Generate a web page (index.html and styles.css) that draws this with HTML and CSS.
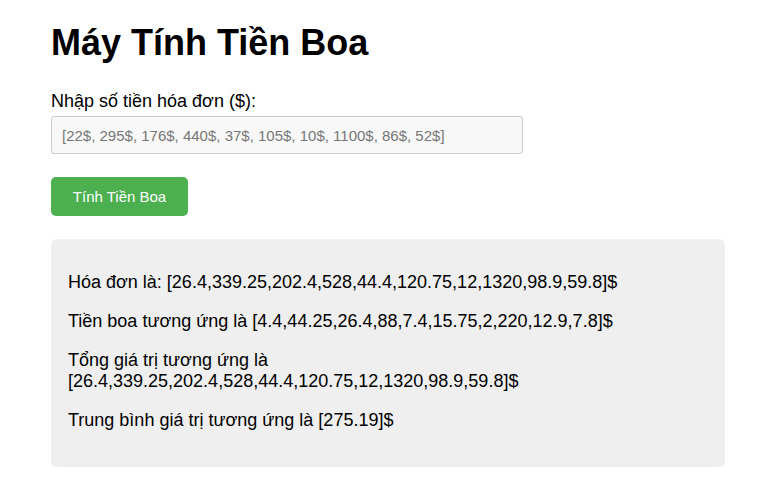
FILE: index.html
```html
<!DOCTYPE html>
<html lang="vi">
<head>
<meta charset="utf-8">
<title>Máy Tính Tiền Boa</title>
<link rel="stylesheet" href="styles.css">
</head>
<body>
<div class="container">
  <h1 class="title">Máy Tính Tiền Boa</h1>
  <label class="label" for="bills">Nhập số tiền hóa đơn ($):</label>
  <input class="input" id="bills" type="text" placeholder="[22$, 295$, 176$, 440$, 37$, 105$, 10$, 1100$, 86$, 52$]">
  <button class="btn" type="button">Tính Tiền Boa</button>
  <div class="result">
    <p class="line">Hóa đơn là: [26.4,339.25,202.4,528,44.4,120.75,12,1320,98.9,59.8]$</p>
    <p class="line">Tiền boa tương ứng là [4.4,44.25,26.4,88,7.4,15.75,2,220,12.9,7.8]$</p>
    <p class="line">Tổng giá trị tương ứng là<br>[26.4,339.25,202.4,528,44.4,120.75,12,1320,98.9,59.8]$</p>
    <p class="line">Trung bình giá trị tương ứng là [275.19]$</p>
  </div>
</div>
</body>
</html>
```
FILE: styles.css
```css
html, body {
  margin: 0;
  padding: 0;
  background: #ffffff;
}
body {
  font-family: "Liberation Sans", Arial, sans-serif;
  color: #000;
}
.container {
  width: 674px;
  margin-left: 51px;
  display: flex;
  flex-direction: column;
  align-items: flex-start;
}
.title {
  font-size: 36px;
  font-weight: bold;
  margin: 22px 0 0 0;
  line-height: 42px;
}
.label {
  font-size: 18px;
  margin-top: 27px;
  line-height: 21px;
}
.input {
  box-sizing: border-box;
  width: 472px;
  height: 38px;
  margin-top: 4px;
  padding: 0 10px;
  font-family: "Liberation Sans", Arial, sans-serif;
  font-size: 15px;
  background: #f8f8f8;
  border: 1px solid #cccccc;
  border-radius: 3px;
  color: #333;
}
.input::placeholder {
  color: #777777;
}
.btn {
  box-sizing: border-box;
  margin-top: 23px;
  width: 137px;
  height: 39px;
  background: #4caf50;
  color: #fff;
  border: none;
  border-radius: 5px;
  font-family: "Liberation Sans", Arial, sans-serif;
  font-size: 15px;
  padding: 0;
}
.result {
  box-sizing: border-box;
  align-self: stretch;
  margin-top: 23px;
  background: #efefef;
  border-radius: 6px;
  padding: 15px 17px 18px;
  font-size: 18px;
}
.line {
  margin: 18px 0;
  line-height: 21px;
}
```
